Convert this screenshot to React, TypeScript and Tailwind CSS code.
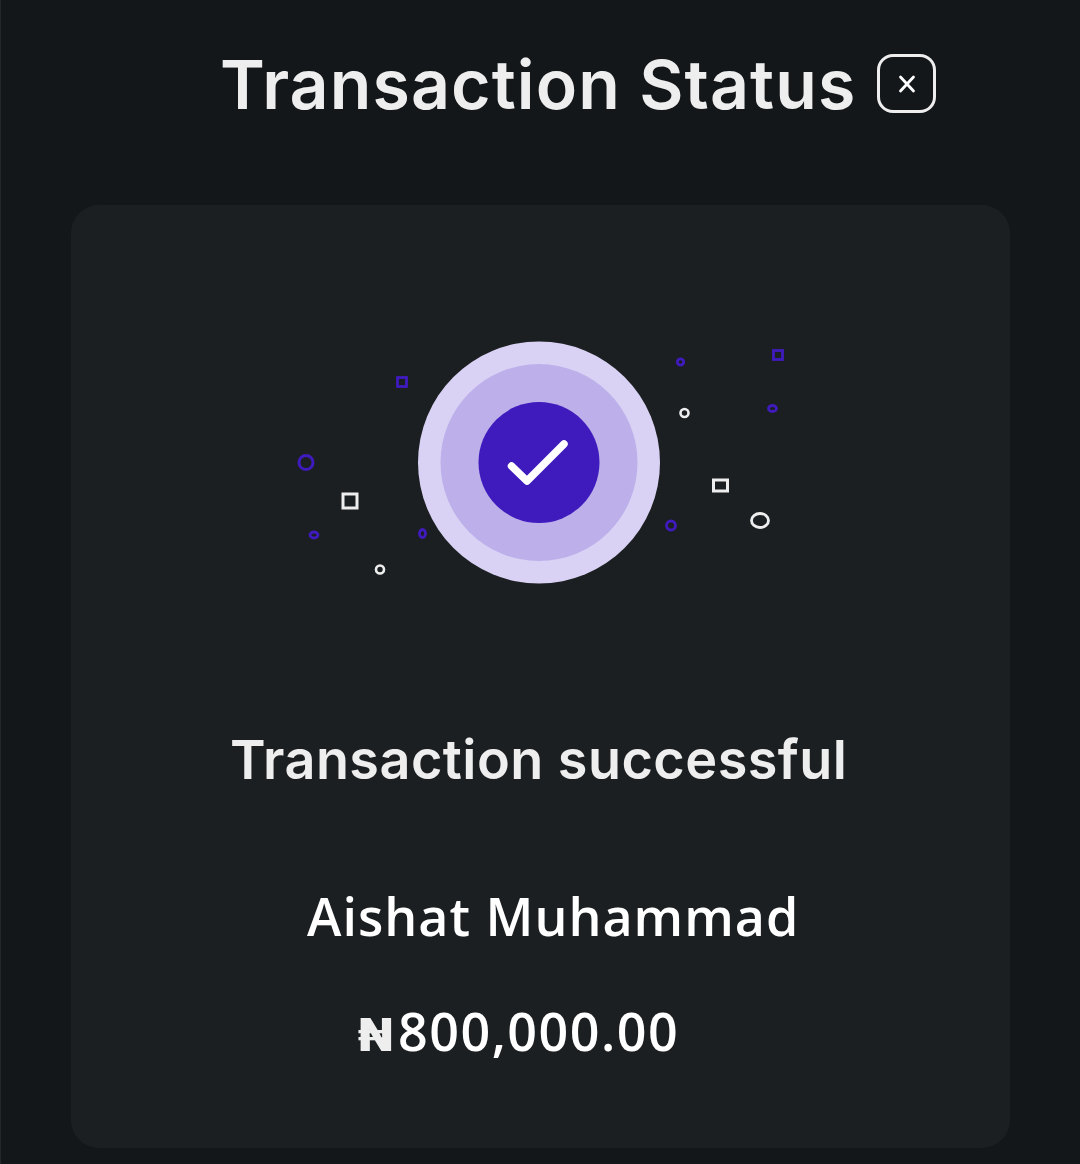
const purple = "#3f1bbd"
const white = "#eeeeee"

function SuccessArt() {
  return (
    <svg width="520" height="270" viewBox="0 0 520 270" fill="none" className="block">
      <circle cx="259" cy="132.5" r="121" fill="#d9d2f4" />
      <circle cx="259" cy="132.5" r="98.5" fill="#bdb0ea" />
      <circle cx="259" cy="132.5" r="60.5" fill={purple} />
      <path d="M231.5 136L247 151L284 114" stroke="#ffffff" strokeWidth="7.5" strokeLinecap="round" strokeLinejoin="round" />

      <rect x="117.5" y="47.5" width="9" height="9" stroke={purple} strokeWidth="2.8" />
      <circle cx="26" cy="132.5" r="7" stroke={purple} strokeWidth="3" />
      <ellipse cx="34" cy="205" rx="4" ry="3" stroke={purple} strokeWidth="2.8" />
      <ellipse cx="142.5" cy="203.5" rx="3" ry="4" stroke={purple} strokeWidth="2.8" />
      <circle cx="400.5" cy="32" r="3.2" stroke={purple} strokeWidth="2.8" />
      <rect x="493.5" y="20.5" width="9" height="9" stroke={purple} strokeWidth="2.8" />
      <ellipse cx="492.5" cy="78.5" rx="4" ry="3" stroke={purple} strokeWidth="2.8" />
      <circle cx="391" cy="195.5" r="4.5" stroke={purple} strokeWidth="2.8" />

      <rect x="63" y="164" width="14" height="14" stroke={white} strokeWidth="3" />
      <circle cx="100" cy="239.5" r="4" stroke={white} strokeWidth="2.6" />
      <circle cx="404.5" cy="83" r="4" stroke={white} strokeWidth="2.6" />
      <rect x="433.5" y="150" width="14" height="11" stroke={white} strokeWidth="3" />
      <ellipse cx="480" cy="190.5" rx="8.5" ry="7" stroke={white} strokeWidth="2.8" />
    </svg>
  )
}

export default function App() {
  return (
    <div className="w-[1080px] h-[1164px] overflow-hidden bg-[#131719] border-l border-[#24282a] font-['Inter',sans-serif]">
      <header className="h-[205px] flex items-start pl-[219px] pt-[54px]">
        <h1 className="w-[636px] text-[68px] leading-[60px] tracking-[1.1px] font-semibold text-[#eeeeee] blur-[0.7px] whitespace-nowrap">
          Transaction Status
        </h1>
        <button className="ml-[21px] w-[59px] h-[59px] flex items-center justify-center rounded-[16px] border-[3px] border-[#eeeeee]">
          <svg width="20" height="20" viewBox="0 0 20 20" fill="none">
            <path d="M3.5 3L16.5 17M16.5 3L3.5 17" stroke="#ffffff" strokeWidth="2.8" strokeLinecap="round" />
          </svg>
        </button>
      </header>

      <main className="ml-[70px] w-[939px] h-[943px] rounded-[28px] bg-[#1b1f21] overflow-hidden">
        <div className="pt-[125px] pl-[209px]">
          <SuccessArt />
        </div>
        <p className="mt-[130px] pl-[159px] text-[54px] leading-[60px] tracking-[0.45px] font-semibold text-[#eeeeee] blur-[0.7px] whitespace-nowrap">
          Transaction successful
        </p>
        <p className="mt-[96px] pl-[236px] font-['Open_Sans',sans-serif] text-[52px] leading-[60px] tracking-[1px] font-semibold text-white whitespace-nowrap">
          Aishat Muhammad
        </p>
        <p className="mt-[55px] pl-[287px] flex items-baseline text-[48px] leading-[60px] whitespace-nowrap">
          <span className="w-[40px] text-[45px] font-black text-[#eeeeee] blur-[0.7px]">₦</span>
          <span className="font-['Open_Sans',sans-serif] text-[52px] tracking-[1.5px] font-semibold text-white">800,000.00</span>
        </p>
      </main>
    </div>
  )
}
